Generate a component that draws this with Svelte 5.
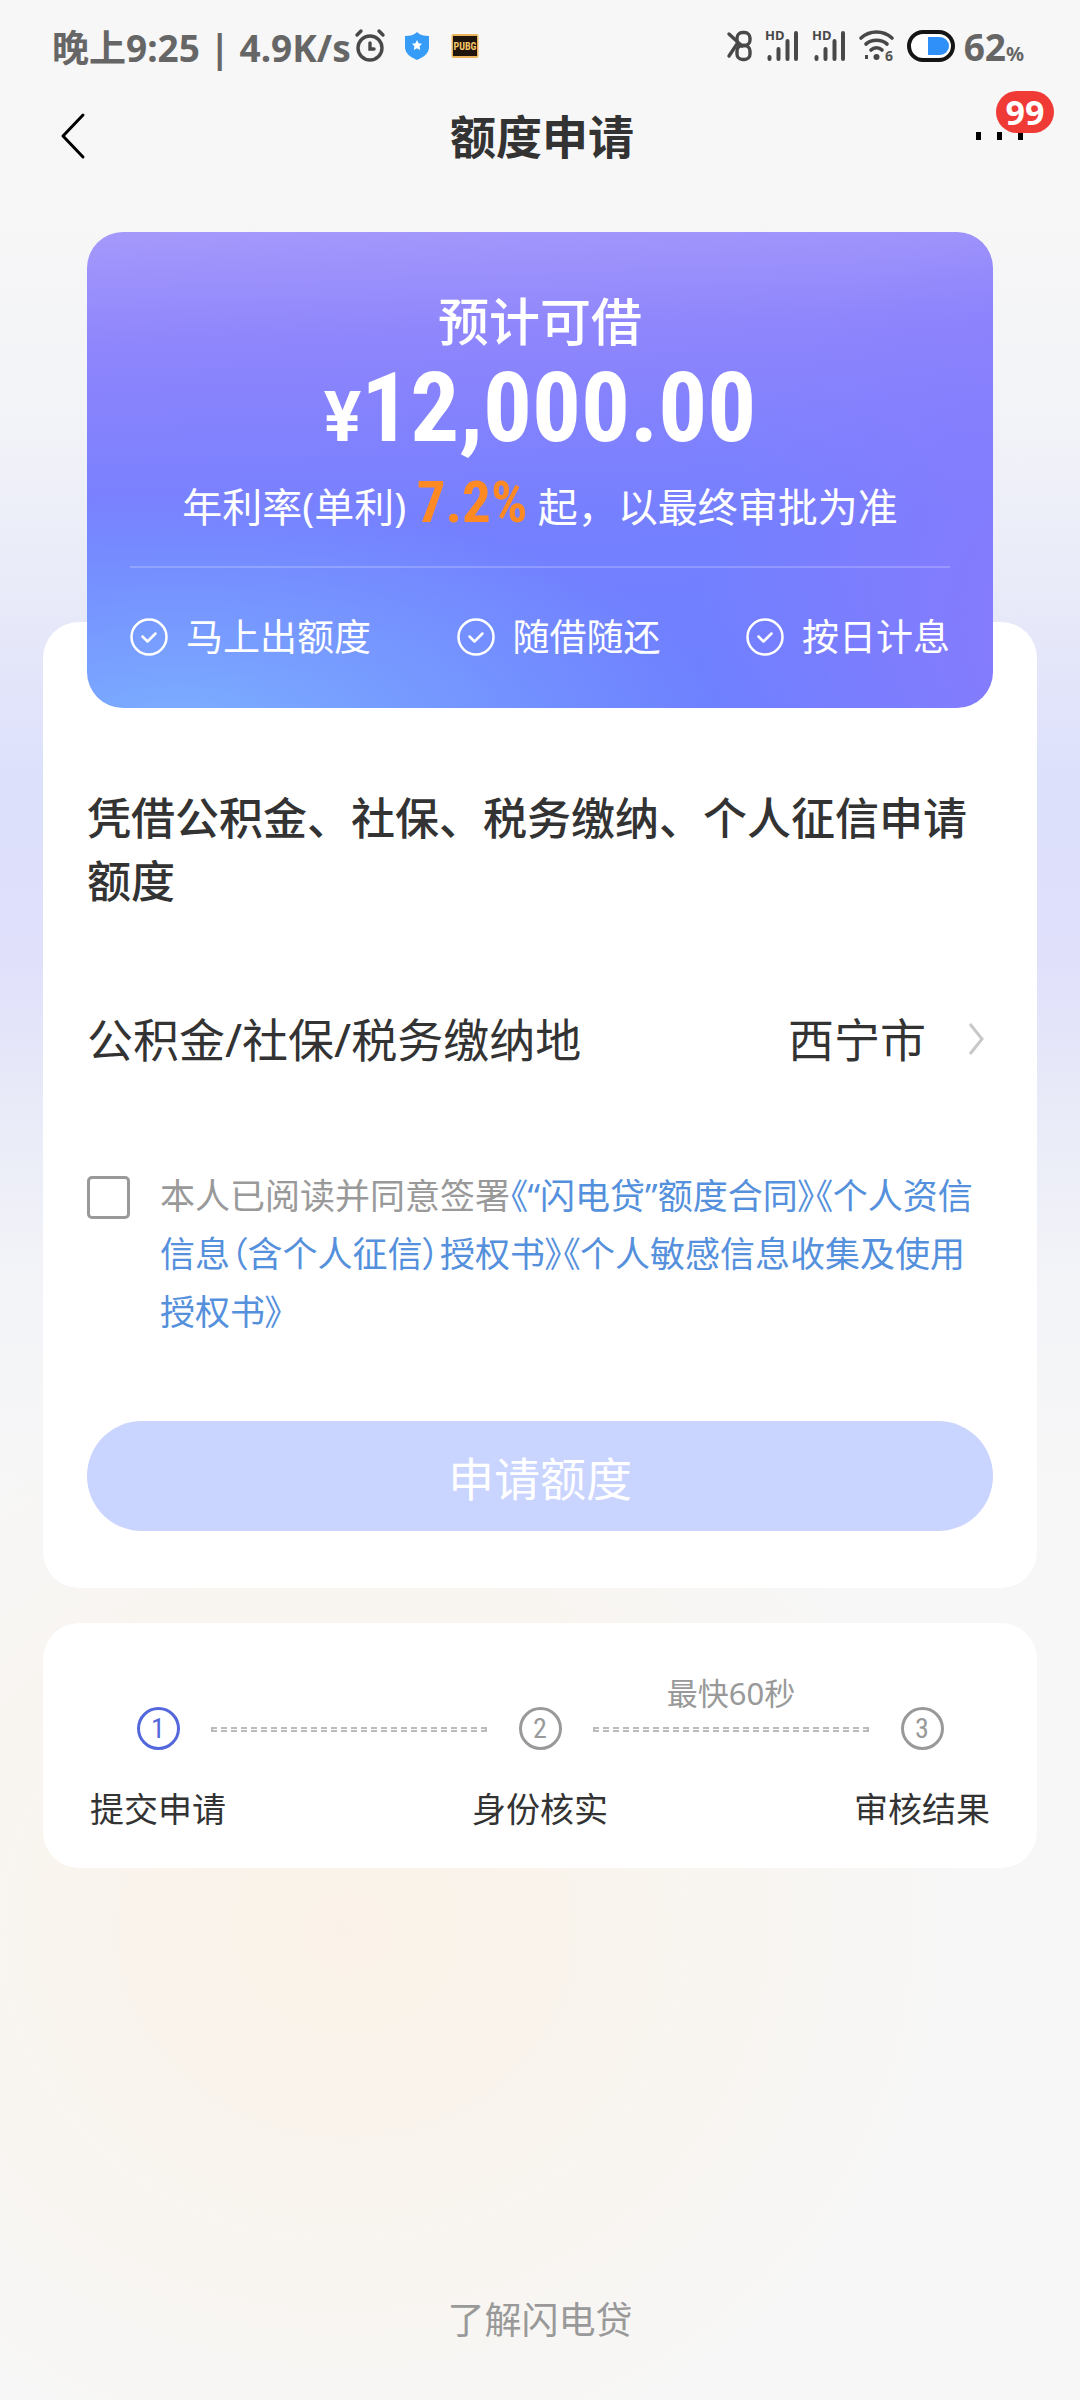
<script>
  const features = ['马上出额度', '随借随还', '按日计息'];

  const agreements = [
    '《“闪电贷”额度合同》',
    '《个人资信信息（含个人征信）授权书》',
    '《个人敏感信息收集及使用授权书》'
  ];

  const steps = [
    {title: '提交申请', active: true},
    {title: '身份核实', note: ''},
    {title: '审核结果', note: '最快60秒'}
  ];

  let agreed = $state(false);
</script>


<div class="page">
  <div class="status-bar">
    <div class="status-left">
      <span>晚上9:25 | 4.9K/s</span>
      <svg class="alarm" width="30" height="32" viewBox="0 0 30 32">
        <circle cx="15" cy="18" r="12" fill="none" stroke="#484848" stroke-width="3.4" />
        <path d="M15 13v6h4M2 5l4-4M28 5l-4-4" fill="none" stroke="#484848" stroke-width="3.4" stroke-linecap="round" />
      </svg>
      <svg class="shield" width="24" height="28" viewBox="0 0 24 28">
        <path d="M12 0c3 3 7 4 12 4v11c0 6-5 10-12 13C5 25 0 21 0 15V4c5 0 9-1 12-4z" fill="#369cf8" />
        <path d="M12 8l1.6 3.2 3.4.6-2.4 2.5.6 3.7-3.2-1.7-3.2 1.7.6-3.7L7 11.8l3.4-.6z" fill="#fff" />
      </svg>
      <svg width="28" height="26" viewBox="0 0 28 26">
        <rect x="0.5" y="1" width="27" height="24" rx="2" fill="#e9b45d" />
        <rect x="2" y="3" width="24" height="20" fill="#20150c" />
        <text x="14" y="17" text-anchor="middle" font-family="Roboto Condensed, Roboto" font-weight="700" font-size="10" fill="#f6c768">PUBG</text>
      </svg>
    </div>
    <div class="status-right">
      <svg width="25" height="32" viewBox="0 0 25 32">
        <g fill="none" stroke="#484848" stroke-width="3.4" stroke-linecap="round">
          <path d="M2 4l13 12M2 26l8-12" />
          <rect x="10" y="2.5" width="13" height="13" rx="5.5" />
          <rect x="10" y="15.5" width="13" height="14" rx="5.5" />
        </g>
      </svg>
      {#each [1, 2] as sim (sim)}
        <svg width="34" height="32" viewBox="0 0 34 32">
          <text x="0" y="10" font-family="Noto Sans" font-weight="700" font-size="13" fill="#484848">HD</text>
          <path d="M4.5 27v2M13.5 19v10M22.5 11v18M31 3v26" stroke="#484848" stroke-width="4" stroke-linecap="round" />
        </svg>
      {/each}
      <svg width="35" height="34" viewBox="0 0 35 34">
        <path d="M2 9c9-8 22-8 31 0M7 15c6-5 15-5 21 0M12 21c3-3 8-3 11 0" fill="none" stroke="#484848" stroke-width="3.6" stroke-linecap="round" />
        <circle cx="17.5" cy="28" r="3" fill="#484848" />
        <path d="M7.5 26v4" stroke="#484848" stroke-width="3" />
        <text x="26" y="32" font-family="Noto Sans" font-weight="700" font-size="14" fill="#555">6</text>
      </svg>
      <svg class="battery" width="48" height="32" viewBox="0 0 48 32">
        <rect x="2" y="2" width="44" height="28" rx="14" fill="#fff" stroke="#151515" stroke-width="4" />
        <path d="M21 7h12a9 9 0 0 1 0 18H21z" fill="#2e90f8" />
      </svg>
      <span class="charge">62<small>%</small></span>
    </div>
  </div>

  <header>
    <button class="icon-button" aria-label="返回">
      <svg width="26" height="46" viewBox="0 0 26 46">
        <path d="M23 2L3 23l20 21" fill="none" stroke="#000" stroke-width="3" stroke-linecap="round" stroke-linejoin="round" />
      </svg>
    </button>
    <h1>额度申请</h1>
    <button class="icon-button" aria-label="更多">
      <svg width="48" height="8" viewBox="0 0 48 8">
        <path d="M0 0h5v8H0zM21 0h5v8h-5zM42 0h5v8h-5z" fill="#000" />
      </svg>
      <span class="badge">99</span>
    </button>
  </header>

  <main>
    <section class="hero">
      <p class="hero-title">预计可借</p>
      <p class="amount"><span>¥</span>12,000.00</p>
      <p class="rate">年利率(单利) <strong>7.2%</strong> 起，以最终审批为准</p>
      <ul class="features">
        {#each features as feature (feature)}
          <li>
            <svg width="38" height="38" viewBox="0 0 38 38" fill="none" stroke="#fff" stroke-linecap="round" stroke-linejoin="round">
              <circle cx="19" cy="19" r="17.5" stroke-width="2.5" />
              <path d="M12.5 18.5l5 5 8-8" stroke-width="2.5" />
            </svg>
            {feature}
          </li>
        {/each}
      </ul>
    </section>

    <section class="card apply">
      <h2>凭借公积金、社保、税务缴纳、个人征信申请额度</h2>
      <button class="city">
        <span>公积金/社保/税务缴纳地</span>
        <span class="city-name">西宁市</span>
        <svg width="16" height="34" viewBox="0 0 16 34">
          <path d="M2 2l12 15L2 32" fill="none" stroke="#c8c8c8" stroke-width="3" />
        </svg>
      </button>
      <div class="agreement">
        <input id="agree" type="checkbox" bind:checked={agreed} />
        <p>
          <label for="agree">本人已阅读并同意签署</label>{#each agreements as agreement (agreement)}<a href="#agreement">{agreement}</a>{/each}
        </p>
      </div>
      <button class="submit">申请额度</button>
    </section>

    <section class="card">
      <ol class="steps">
        {#each steps as step, i (step.title)}
          {#if i > 0}
            <li class="line" aria-hidden={!step.note}>{step.note}</li>
          {/if}
          <li class="step" class:active={step.active}>
            <span class="number">{i + 1}</span>
            <span>{step.title}</span>
          </li>
        {/each}
      </ol>
    </section>
  </main>

  <footer>
    <a href="#about">了解闪电贷</a>
  </footer>
</div>


<style>
  :global(body) {
    margin: 0;
  }

  .page {
    display: flex;
    flex-direction: column;
    min-height: 100vh;
    box-sizing: border-box;
    font-family: "Noto Sans", "Noto Sans CJK SC", sans-serif;
    color: #333;
    background:
      radial-gradient(ellipse 620px 560px at 32% 1930px, #faf2e8 0%, rgba(250, 243, 234, 0.7) 45%, rgba(248, 248, 248, 0) 100%),
      linear-gradient(to bottom, #f7f7f7 200px, #f3f4f8 400px, #e8eaf9 600px, #dce0fb 780px, #e0e0fb 960px, #e8eaf8 1100px, #f3f4f8 1280px, #f7f7f7 1500px);
  }

  h1, h2, p, ul, ol {
    margin: 0;
    padding: 0;
    list-style: none;
  }

  button {
    font: inherit;
    color: inherit;
    border: none;
    background: none;
    padding: 0;
  }

  a {
    text-decoration: none;
  }

  svg {
    display: block;
    flex: none;
    overflow: visible;
  }

  .status-bar {
    display: flex;
    justify-content: space-between;
    align-items: center;
    height: 92px;
    padding: 0 56px 0 52px;
    font-size: 37px;
    font-weight: 700;
    color: #666;
  }

  .status-left, .status-right {
    display: flex;
    align-items: center;
  }

  .alarm {
    margin: 0 20px 0 4px;
  }

  .shield {
    margin-right: 22px;
  }

  .status-right {
    gap: 13px;
  }

  .charge {
    margin-left: -4px;
  }

  .charge small {
    font-size: 20px;
  }

  header {
    display: flex;
    justify-content: space-between;
    align-items: center;
    height: 88px;
    padding: 0 56px 0 60px;
  }

  h1 {
    font-size: 46px;
    font-weight: 700;
    line-height: 60px;
  }

  .icon-button {
    position: relative;
    display: flex;
    align-items: center;
    width: 48px;
    height: 60px;
  }

  .badge {
    position: absolute;
    top: -15px;
    left: 20px;
    width: 58px;
    border-radius: 21px;
    background: #f03a36;
    color: #fff;
    font-size: 34px;
    font-weight: 700;
    line-height: 42px;
    text-align: center;
  }

  main {
    display: flex;
    flex-direction: column;
    padding: 52px 43px 0;
  }

  .hero {
    position: relative;
    display: flex;
    flex-direction: column;
    align-items: center;
    margin: 0 44px;
    padding: 56px 43px 46px;
    border-radius: 36px;
    color: #fff;
    background:
      radial-gradient(ellipse 60% 50% at 10% 105%, #7cafff 0%, rgba(124, 175, 255, 0) 100%),
      radial-gradient(ellipse 40% 90% at 108% 85%, #8a7bfd 0%, rgba(138, 123, 253, 0) 100%),
      linear-gradient(178deg, #a599fb 0%, #8f86fc 22%, #8482fd 38%, #7480ff 62%, #6d80ff 100%);
  }

  .hero-title {
    font-size: 51px;
    font-weight: 500;
    line-height: 66px;
  }

  .amount {
    font-family: "Roboto Condensed", "Roboto", sans-serif;
    font-size: 97px;
    font-weight: 700;
    line-height: 108px;
  }

  .amount span {
    font-family: "Roboto", sans-serif;
    font-size: 70px;
  }

  .rate {
    height: 78px;
    font-size: 40px;
    line-height: 72px;
  }

  .rate strong {
    font-family: "Roboto Condensed", "Roboto", sans-serif;
    font-size: 57px;
    line-height: 60px;
    color: #ff8a24;
  }

  .features {
    display: flex;
    justify-content: space-between;
    align-self: stretch;
    margin-top: 17px;
    padding-top: 44px;
    border-top: 2px solid rgba(255, 255, 255, 0.2);
    font-size: 37px;
    line-height: 50px;
  }

  .features li {
    display: flex;
    align-items: center;
    gap: 18px;
  }

  .card {
    padding: 0 44px;
    border-radius: 36px;
    background: #fff;
  }

  .apply {
    margin: -86px 0 35px;
    padding-top: 165px;
    padding-bottom: 57px;
  }

  h2 {
    font-size: 44px;
    font-weight: 500;
    line-height: 63px;
  }

  .city {
    display: flex;
    align-items: center;
    width: 100%;
    margin-top: 96px;
    padding-right: 9px;
    font-size: 46px;
    line-height: 60px;
    box-sizing: border-box;
  }

  .city-name {
    margin: 0 42px 0 auto;
  }

  .agreement {
    display: flex;
    gap: 30px;
    margin-top: 98px;
    font-size: 35px;
    line-height: 58px;
    color: #999;
  }

  .agreement input {
    appearance: none;
    flex: none;
    width: 43px;
    height: 43px;
    margin: 9px 0 0;
    border: 3px solid #999;
    border-radius: 5px;
    background: #fff;
  }

  .agreement input:checked {
    border-color: #5468e0;
    background: #5468e0;
  }

  .agreement a {
    color: #5590dc;
    font-feature-settings: "palt";
  }

  .submit {
    display: block;
    width: 100%;
    height: 110px;
    margin-top: 80px;
    border-radius: 55px;
    background: #c9d4ff;
    color: #fff;
    font-size: 46px;
  }

  .steps {
    display: flex;
    justify-content: space-between;
    padding: 54px 0 34px;
  }

  .step {
    display: flex;
    flex: none;
    flex-direction: column;
    align-items: center;
    gap: 34px;
    width: 142px;
    margin-top: 30px;
    font-size: 34px;
    line-height: 50px;
  }

  .number {
    width: 43px;
    height: 43px;
    box-sizing: border-box;
    border: 3px solid #999;
    border-radius: 50%;
    color: #999;
    font-family: "Roboto Condensed", "Roboto", sans-serif;
    font-size: 28px;
    line-height: 37px;
    text-align: center;
  }

  .active .number {
    border-color: #5468dc;
    color: #5468dc;
  }

  .line {
    display: flex;
    flex: 1;
    flex-direction: column;
    justify-content: flex-end;
    height: 55px;
    margin: 0 -18px;
    color: #999;
    font-size: 31px;
    line-height: 31px;
    text-align: center;
  }

  .line::after {
    content: "";
    height: 1px;
    margin-top: 18px;
    border: 2px dashed #bbb;
  }

  footer {
    margin-top: auto;
    padding: 60px 0 53px;
    font-size: 37px;
    line-height: 54px;
    text-align: center;
  }

  footer a {
    color: #999;
  }
</style>
